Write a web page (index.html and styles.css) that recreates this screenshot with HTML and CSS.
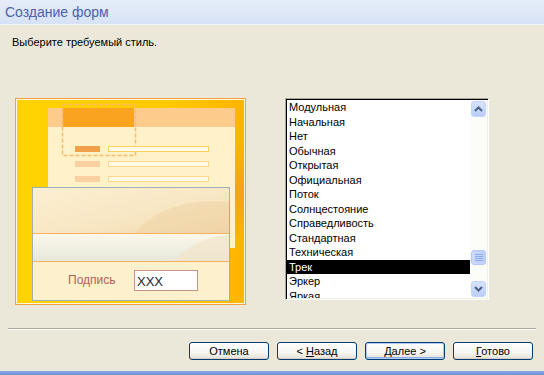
FILE: index.html
```html
<!DOCTYPE html>
<html lang="ru">
<head>
<meta charset="utf-8">
<title>Создание форм</title>
<link rel="stylesheet" href="styles.css">
</head>
<body>
<div class="dialog">
  <div class="title">Создание форм</div>
  <div class="prompt">Выберите требуемый стиль.</div>
  <div class="main">
    <div class="preview">
      <svg width="231" height="207" viewBox="0 0 231 207" xmlns="http://www.w3.org/2000/svg">
        <defs>
          <linearGradient id="yel" x1="0" y1="0" x2="1" y2="0">
            <stop offset="0" stop-color="#ffd400"/>
            <stop offset="0.7" stop-color="#ffc800"/>
            <stop offset="1" stop-color="#ffb400"/>
          </linearGradient>
          <radialGradient id="org" cx="1" cy="0.45" r="0.25">
            <stop offset="0" stop-color="#f89a20" stop-opacity="0.8"/>
            <stop offset="1" stop-color="#f89a20" stop-opacity="0"/>
          </radialGradient>
          <linearGradient id="sec1" x1="0" y1="0" x2="1" y2="1">
            <stop offset="0" stop-color="#fcefd2"/>
            <stop offset="0.6" stop-color="#f8e6c2"/>
            <stop offset="1" stop-color="#eed2a4"/>
          </linearGradient>
          <linearGradient id="sec2" x1="0" y1="0" x2="0" y2="1">
            <stop offset="0" stop-color="#fdf8ea"/>
            <stop offset="1" stop-color="#e6e8dc"/>
          </linearGradient>
        </defs>
        <rect x="0.5" y="0.5" width="230" height="206" fill="#fff6e0" stroke="#f5a040"/>
        <rect x="2" y="2" width="227" height="203" fill="url(#yel)"/>
        <rect x="2" y="2" width="227" height="203" fill="url(#org)"/>
        <rect x="33" y="10" width="187" height="140" fill="#fff2c8"/>
        <rect x="33" y="10" width="187" height="19" fill="#fdcb8c"/>
        <rect x="48" y="10" width="71" height="19" fill="#f9a320"/>
        <rect x="47.5" y="6.5" width="73" height="51" fill="none" stroke="#f9bb6a" stroke-width="1.5" stroke-dasharray="4 2"/>
        <rect x="60" y="48" width="25" height="6" fill="#f0a048"/>
        <rect x="60" y="63" width="25" height="6" fill="#fad0a0"/>
        <rect x="60" y="78" width="25" height="6" fill="#fad0a0"/>
        <rect x="93.5" y="48.5" width="100" height="5" fill="#fffbe8" stroke="#fcd060"/>
        <rect x="93.5" y="63.5" width="100" height="5" fill="#fffbe8" stroke="#fcd888"/>
        <rect x="93.5" y="78.5" width="100" height="5" fill="#fffbe8" stroke="#fcd888"/>
        <rect x="17" y="89" width="198" height="46" fill="url(#sec1)"/>
        <path d="M120 135 C140 110 175 100 215 104 L215 135 Z" fill="#f0d6a8" opacity="0.6"/>
        <rect x="17" y="135" width="198" height="28" fill="url(#sec2)"/>
        <path d="M160 163 C175 145 195 138 215 137 L215 163 Z" fill="#f2e4c8" opacity="0.7"/>
        <rect x="17" y="163" width="198" height="40" fill="#fdf0cc"/>
        <line x1="17" y1="135.5" x2="215" y2="135.5" stroke="#f5b060"/>
        <line x1="17" y1="163.5" x2="215" y2="163.5" stroke="#f5b060"/>
        <rect x="17.5" y="89.5" width="197" height="113" fill="none" stroke="#9fb1b8"/>
        <text x="53" y="186" class="sig">Подпись</text>
        <rect x="119.5" y="172.5" width="63" height="20" fill="#ffffff" stroke="#c49488"/>
        <text x="122" y="188" class="xxx">XXX</text>
      </svg>
    </div>
    <div class="listbox">
      <div class="items">
        <div class="item">Модульная</div>
        <div class="item">Начальная</div>
        <div class="item">Нет</div>
        <div class="item">Обычная</div>
        <div class="item">Открытая</div>
        <div class="item">Официальная</div>
        <div class="item">Поток</div>
        <div class="item">Солнцестояние</div>
        <div class="item">Справедливость</div>
        <div class="item">Стандартная</div>
        <div class="item">Техническая</div>
        <div class="item selected">Трек</div>
        <div class="item">Эркер</div>
        <div class="item">Яркая</div>
      </div>
      <div class="scrollbar">
        <div class="sbtn">
          <svg width="9" height="6" viewBox="0 0 9 6"><polyline points="1,5 4.5,1.5 8,5" fill="none" stroke="#4d6185" stroke-width="2"/></svg>
        </div>
        <div class="track">
          <div class="thumb">
            <svg width="8" height="7" viewBox="0 0 8 7"><path d="M0 0.5H8M0 2.5H8M0 4.5H8M0 6.5H8" stroke="#8faaea" stroke-width="1"/></svg>
          </div>
        </div>
        <div class="sbtn">
          <svg width="9" height="6" viewBox="0 0 9 6"><polyline points="1,1 4.5,4.5 8,1" fill="none" stroke="#4d6185" stroke-width="2"/></svg>
        </div>
      </div>
    </div>
  </div>
  <div class="separator"></div>
  <div class="buttons">
    <button class="btn">Отмена</button>
    <button class="btn">&lt; <u>Н</u>азад</button>
    <button class="btn default"><u>Д</u>алее &gt;</button>
    <button class="btn"><u>Г</u>отово</button>
  </div>
  <div class="frame-bottom"></div>
</div>
</body>
</html>
```

FILE: styles.css
```css
* { box-sizing: border-box; }
html, body { margin: 0; padding: 0; }
body {
  width: 544px;
  height: 375px;
  overflow: hidden;
  background: #ebe8da;
  font-family: "Liberation Sans", Arial, sans-serif;
  font-size: 11px;
  color: #000;
}
.dialog {
  display: flex;
  flex-direction: column;
  height: 375px;
}
.title {
  height: 25px;
  line-height: 24px;
  padding-left: 5px;
  font-size: 14px;
  color: #4a62ac;
  background: linear-gradient(#e6edf9, #d6e2f5);
  border-bottom: 1px solid #f2f6fc;
}
.prompt {
  margin-top: 11px;
  padding-left: 12px;
  line-height: 13px;
  font-size: 11px;
}
.main {
  display: flex;
  align-items: flex-start;
  margin-top: 49px;
  height: 207px;
}
.preview {
  margin-left: 15px;
  width: 231px;
  height: 207px;
}
.preview svg { display: block; }
.sig {
  font-family: "Liberation Sans", Arial, sans-serif;
  font-size: 12px;
  fill: #b0605a;
}
.xxx {
  font-family: "Liberation Sans", Arial, sans-serif;
  font-size: 13px;
  fill: #1c1c30;
}
.listbox {
  margin-left: 39px;
  width: 204px;
  height: 202px;
  display: flex;
  background: #fff;
  border-top: 1px solid #aca899;
  border-left: 1px solid #aca899;
  border-right: 1px solid #fff;
  border-bottom: 1px solid #fff;
  box-shadow: inset 1px 1px 0 #000, inset -1px -1px 0 #f1efe2;
  padding: 1px;
  overflow: hidden;
}
.items {
  flex: 1;
  overflow: hidden;
}
.item {
  height: 14.5px;
  line-height: 14.5px;
  padding-left: 2px;
  white-space: nowrap;
  color: #000;
}
.item.selected {
  background: #000;
  color: #fff;
}
.scrollbar {
  width: 17px;
  display: flex;
  flex-direction: column;
  background: #fcfcf8;
  padding: 0 1px;
}
.sbtn {
  height: 16px;
  margin: 1px 0;
  border: 1px solid #c3d3fd;
  border-radius: 3px;
  background: linear-gradient(#d8e4fd, #b9cdf7);
  display: flex;
  align-items: center;
  justify-content: center;
}
.track {
  flex: 1;
  display: flex;
  flex-direction: column;
  justify-content: flex-end;
  padding-bottom: 15px;
}
.thumb {
  height: 15px;
  border: 1px solid #b5c8f4;
  border-radius: 3px;
  background: linear-gradient(90deg, #cddbfc, #bcd0f8);
  display: flex;
  align-items: center;
  justify-content: center;
}
.thumb svg, .sbtn svg { display: block; }
.separator {
  margin: 23px 8px 0 8px;
  height: 2px;
  border-top: 1px solid #aca899;
  border-bottom: 1px solid #ffffff;
}
.buttons {
  display: flex;
  justify-content: flex-end;
  gap: 8px;
  padding-right: 11px;
  margin-top: 12px;
}
.btn {
  width: 80px;
  height: 18px;
  padding: 0;
  font-family: "Liberation Sans", Arial, sans-serif;
  font-size: 11px;
  color: #000;
  border: 1px solid #003c74;
  border-radius: 3px;
  background: linear-gradient(#ffffff 0%, #f6f5f0 60%, #e3e0d5 100%);
  box-shadow: inset 0 -1px 0 #d6d0c5;
}
.btn.default {
  box-shadow: inset 0 0 0 1px #b3cbf3, inset 0 -2px 0 #8eaee8;
}
.btn u { text-decoration: underline; }
.frame-bottom {
  margin-top: auto;
  height: 4px;
  background: linear-gradient(#8ea8e6, #6d8fdc);
}
```
